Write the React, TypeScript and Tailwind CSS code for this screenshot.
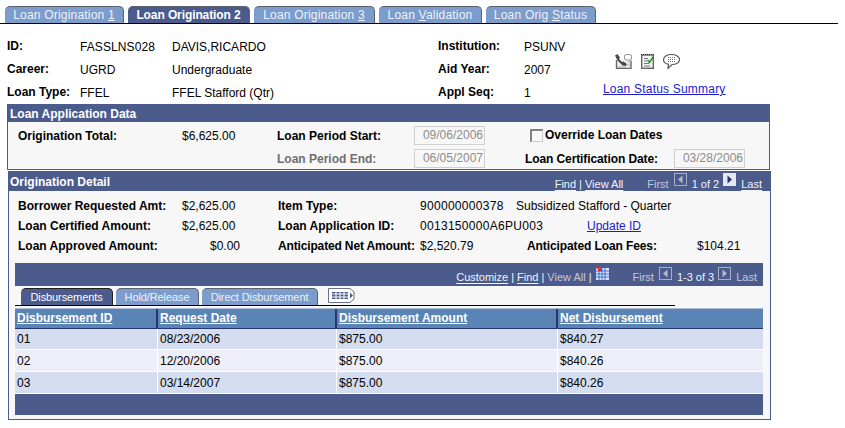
import React from 'react';

const tabs = [
  { label: 'Loan Origination ', key: '1', width: 'w-[119px]' },
  { label: 'Loan Origination 2', key: '', width: 'w-[122px]', active: true },
  { label: 'Loan Origination ', key: '3', width: 'w-[121px]' },
  { label: 'Loan ', key: 'V', rest: 'alidation', width: 'w-[103px]' },
  { label: 'Loan Orig ', key: 'S', rest: 'tatus', width: 'w-[110px]' },
];

const rows = [
  { id: '01', date: '08/23/2006', amount: '$875.00', net: '$840.27', bg: 'bg-[#d3ddef]', h: 'h-[21px]' },
  { id: '02', date: '12/20/2006', amount: '$875.00', net: '$840.26', bg: 'bg-[#edeef8]', h: 'h-[22px]' },
  { id: '03', date: '03/14/2007', amount: '$875.00', net: '$840.26', bg: 'bg-[#d3ddef]', h: 'h-[22px]' },
];

function Lbl({ children, className = 'text-black' }: { children: React.ReactNode; className?: string }) {
  return <span className={`font-bold whitespace-nowrap ${className}`}>{children}</span>;
}

function Val({ children, className = '' }: { children: React.ReactNode; className?: string }) {
  return <span className={`text-black whitespace-nowrap ${className}`}>{children}</span>;
}

function DateBox({ value }: { value: string }) {
  return (
    <div className="h-[19px] w-[71px] border border-[#d0d0d0] bg-[#f7f7f7] pr-[1px] text-right leading-[17px] text-[#8c8c8c]">
      {value}
    </div>
  );
}

function PageArrow({ dir, on }: { dir: 'left' | 'right'; on?: boolean }) {
  return (
    <svg width="13" height="13" viewBox="0 0 13 13" className="mb-[8px] shrink-0">
      <rect x="0.5" y="0.5" width="12" height="12" fill={on ? '#e4e8f2' : '#4b5b8c'} stroke={on ? '#e4e8f2' : '#a8aec4'} />
      <path
        d={dir === 'left' ? 'M8.5 2.5 L4 6.5 L8.5 10.5 Z' : 'M4.5 2.5 L9 6.5 L4.5 10.5 Z'}
        fill={on ? '#27376e' : '#b4b8c8'}
      />
    </svg>
  );
}

function IconPhone() {
  return (
    <svg width="17" height="15" viewBox="0 0 17 15">
      <path d="M1.5 6 V14.5 H16 V6.5" fill="#f0f0f0" stroke="#666" strokeWidth="1.4" />
      <path d="M0 1.5 L2.5 0 L5 3.5 L4 5 L7 8 L8.5 7.5 L12 10 L11 12 L7.5 11.5 L2.5 6.5 Z" fill="#4a4a4a" />
      <rect x="9.5" y="0.5" width="7" height="5.5" rx="2" fill="#fff" stroke="#888" />
      <path d="M3 13 H11 M12.5 8 H15 M12.5 11 H15" stroke="#aaa" strokeWidth="1" />
    </svg>
  );
}

function IconNote() {
  return (
    <svg width="13" height="15" viewBox="0 0 13 15">
      <rect x="0.7" y="1" width="11.6" height="13.3" fill="#f4f4f4" stroke="#666" strokeWidth="1.4" />
      <path d="M0 0.5 H13" stroke="#333" strokeDasharray="1 1" />
      <path d="M3 4.5 H7 M3 7 H6 M3 9.5 H8 M3 12 H9" stroke="#777" />
      <path d="M6.5 6 L8.5 8.5 L12 3" fill="none" stroke="#1c9a2c" strokeWidth="1.6" />
    </svg>
  );
}

function IconChat() {
  return (
    <svg width="17" height="15" viewBox="0 0 17 15">
      <path
        d="M8.5 0.5 C13 0.5 16.5 2.8 16.5 5.7 C16.5 8.5 13 10.5 9 10.5 L5 14.5 L5.5 10.2 C2.5 9.7 0.5 8 0.5 5.7 C0.5 2.8 4 0.5 8.5 0.5 Z"
        fill="#fff"
        stroke="#5a5a5a"
        strokeWidth="1.2"
      />
      <path d="M5 3.5 H12 M5 5.5 H12 M5 7.5 H12" stroke="#3f78c8" strokeDasharray="1 1" />
    </svg>
  );
}

function IconGrid() {
  return (
    <svg width="14" height="14" viewBox="0 0 14 14">
      <rect x="1" y="2" width="13" height="12" fill="#dfe8fb" />
      <path d="M1 5 H14 M1 8 H14 M1 11 H14 M4 2 V14 M7 2 V14 M10 2 V14" stroke="#3d6fd0" strokeWidth="1" />
      <path d="M0 0 L5 4 M3.5 4.5 H6 V2" stroke="#e02020" strokeWidth="1.6" fill="none" />
    </svg>
  );
}

function IconTabMenu() {
  return (
    <svg width="27" height="15" viewBox="0 0 27 15">
      <path d="M0.5 0.5 H22 L26 4 V11 L22 14.5 H0.5 Z" fill="#fff" stroke="#6a7186" />
      <rect x="4" y="4" width="16" height="7" fill="#4b5b8c" />
      <path d="M4 6 H20 M4 9 H20 M8 4 V11 M12 4 V11 M16 4 V11" stroke="#fff" />
      <path d="M22 4.5 L25 7.5 L22 10.5 Z" fill="#4b5b8c" />
    </svg>
  );
}

function Underlined({ children, className = '' }: { children: React.ReactNode; className?: string }) {
  return <span className={`underline underline-offset-2 ${className}`}>{children}</span>;
}

export default function App() {
  return (
    <div className="h-[428px] w-[845px] overflow-hidden bg-white pt-[6px] font-['Liberation_Sans',Arial,sans-serif] text-[12px] leading-[14px] text-black">
      {/* page tabs */}
      <div className="flex h-[18px] w-[838px] gap-[4px] border-b border-black pl-[5px]">
        {tabs.map((t) => (
          <div
            key={t.label + t.key}
            className={`flex h-[17px] items-center justify-center rounded-t-[5px] border-t border-r border-[#5c6270] ${t.width} ${
              t.active ? 'bg-[#4b5b8c] font-bold tracking-[-0.1px] text-white' : 'bg-[#7c9ccc] tracking-[0.2px] text-[#eef2fa]'
            }`}
          >
            <span className="whitespace-pre">
              {t.label}
              {t.key && <span className="underline">{t.key}</span>}
              {t.rest}
            </span>
          </div>
        ))}
      </div>

      {/* student header */}
      <div className="flex h-[80px] pl-[7px]">
        <div className="grid h-full w-[431px] grid-cols-[73px_92px_1fr] grid-rows-[34px_23px_23px] items-end pb-[1px]">
          <Lbl className="pb-[5px] text-black">ID:</Lbl>
          <Val className="pb-[4px] tracking-[0.1px]">FASSLNS028</Val>
          <Val className="pb-[4px]">DAVIS,RICARDO</Val>
          <Lbl className="pb-[5px] text-black">Career:</Lbl>
          <Val className="pb-[4px]">UGRD</Val>
          <Val className="pb-[4px]">Undergraduate</Val>
          <Lbl className="pb-[5px] text-black">Loan Type:</Lbl>
          <Val className="pb-[4px]">FFEL</Val>
          <Val className="pb-[4px]">FFEL Stafford (Qtr)</Val>
        </div>
        <div className="grid h-full w-[165px] grid-cols-[86px_1fr] grid-rows-[34px_23px_23px] items-end pb-[1px]">
          <Lbl className="pb-[5px] text-black">Institution:</Lbl>
          <Val className="pb-[4px]">PSUNV</Val>
          <Lbl className="pb-[5px] text-black">Aid Year:</Lbl>
          <Val className="pb-[4px]">2007</Val>
          <Lbl className="pb-[5px] text-black">Appl Seq:</Lbl>
          <Val className="pb-[4px]">1</Val>
        </div>
        <div className="flex flex-col pt-[30px]">
          <div className="flex items-center gap-[9px] pl-[12px]">
            <IconPhone />
            <IconNote />
            <IconChat />
          </div>
          <a className="mt-[13px] whitespace-nowrap tracking-[0.2px] text-[#1c1cd0] underline">Loan Status Summary</a>
        </div>
      </div>

      {/* loan application data */}
      <div className="ml-[7px] w-[763px] border border-[#4b5b8c] bg-[#f7f7f7]">
        <div className="flex h-[17px] items-center bg-[#4b5b8c] pl-[2px] font-bold text-white">Loan Application Data</div>
        <div className="grid h-[47px] grid-cols-[164px_95px_137px_111px_149px_1fr] grid-rows-[24px_23px] items-center pt-[1px] pl-[10px]">
          <Lbl className="pt-[1px] text-black">Origination Total:</Lbl>
          <Val className="pt-[1px]">$6,625.00</Val>
          <Lbl className="pt-[1px] text-black">Loan Period Start:</Lbl>
          <DateBox value="09/06/2006" />
          <label className="col-span-2 flex items-center gap-[2px] pl-[5px]">
            <span className="h-[13px] w-[13px] border-t-2 border-r border-b border-l-2 border-t-[#808080] border-r-[#ccc] border-b-[#ccc] border-l-[#808080] bg-[#f7f7f7]" />
            <Lbl>Override Loan Dates</Lbl>
          </label>
          <span />
          <span />
          <Lbl className="pt-[1px] text-[#6f6f6f]">Loan Period End:</Lbl>
          <DateBox value="06/05/2007" />
          <Lbl className="pt-[1px] tracking-[-0.1px] text-black">Loan Certification Date:</Lbl>
          <DateBox value="03/28/2006" />
        </div>
      </div>

      {/* origination detail */}
      <div className="mt-[1px] ml-[8px] h-[249px] w-[763px] border-x border-b border-[#4b5b8c] bg-[#f7f7f7]">
        <div className="flex h-[20px] items-center justify-between bg-[#4b5b8c] pr-[8px] pl-[1px] text-white">
          <span className="pt-[1px] font-bold">Origination Detail</span>
          <div className="flex items-center pt-[5px] text-[11px] text-[#f2f4fa]">
            <Underlined>Find</Underlined>
            <span className="mx-[3px]">|</span>
            <Underlined>View All</Underlined>
            <span className="mr-[5px] ml-[24px] text-[#c3c8da]">First</span>
            <PageArrow dir="left" />
            <span className="mr-[4px] ml-[5px]">1 of 2</span>
            <PageArrow dir="right" on />
            <Underlined className="ml-[5px]">Last</Underlined>
          </div>
        </div>

        <div className="grid grid-cols-[164px_96px_142px_96px_1fr] grid-rows-[20px_20px_20px] items-center pt-[5px] pl-[9px]">
          <Lbl>Borrower Requested Amt:</Lbl>
          <Val>$2,625.00</Val>
          <Lbl>Item Type:</Lbl>
          <Val className="tracking-[0.3px]">900000000378</Val>
          <Val>Subsidized Stafford - Quarter</Val>
          <Lbl>Loan Certified Amount:</Lbl>
          <Val>$2,625.00</Val>
          <Lbl>Loan Application ID:</Lbl>
          <Val className="tracking-[0.3px]">0013150000A6PU003</Val>
          <a className="pl-[71px] text-[#1c1cd0] underline">Update ID</a>
          <Lbl>Loan Approved Amount:</Lbl>
          <Val className="pl-[28px]">$0.00</Val>
          <Lbl className="tracking-[-0.15px] text-black">Anticipated Net Amount:</Lbl>
          <Val>$2,520.79</Val>
          <div className="flex">
            <Lbl className="w-[181px] pl-[11px] tracking-[-0.1px] text-black">Anticipated Loan Fees:</Lbl>
            <Val>$104.21</Val>
          </div>
        </div>

        {/* grid block */}
        <div className="mt-[7px] ml-[6px] w-[748px]">
          <div className="flex h-[23px] items-center justify-end bg-[#4b5b8c] pt-[5px] pr-[6px] text-[11px] text-[#f2f4fa]">
            <Underlined>Customize</Underlined>
            <span className="mx-[3px]">|</span>
            <Underlined>Find</Underlined>
            <span className="mx-[3px]">|</span>
            <span className="text-[#c3c8da]">View All</span>
            <span className="mx-[3px]">|</span>
            <span className="mb-[8px] flex">
              <IconGrid />
            </span>
            <span className="mr-[5px] ml-[24px] text-[#c3c8da]">First</span>
            <PageArrow dir="left" />
            <span className="mr-[4px] ml-[5px]">1-3 of 3</span>
            <PageArrow dir="right" />
            <span className="ml-[5px] text-[#c3c8da]">Last</span>
          </div>

          <div className="mt-[2px] flex h-[18px] w-[660px] gap-[3px] border-b border-black pl-[6px] text-[11px] tracking-[-0.1px]">
            <div className="flex h-[17px] w-[92px] items-center justify-center rounded-t-[5px] border-t border-r border-[#222] bg-[#4b5b8c] text-white">
              Disbursements
            </div>
            <div className="flex h-[17px] w-[83px] items-center justify-center rounded-t-[5px] border-t border-r border-[#5c6270] bg-[#7c9ccc] text-[#eef2fa]">
              Hold/Release
            </div>
            <div className="flex h-[17px] w-[116px] items-center justify-center rounded-t-[5px] border-t border-r border-[#5c6270] bg-[#7c9ccc] text-[#eef2fa]">
              Direct Disbursement
            </div>
            <span className="ml-[7px]">
              <IconTabMenu />
            </span>
          </div>

          <div className="mt-[2px] grid h-[21px] grid-cols-[143px_179px_221px_1fr] items-center border-t border-b border-t-[#a9bdd6] border-b-[#27376e] bg-[#5a84b5] font-bold text-white">
            <span className="border-r-2 border-[#27376e] pl-[2px] leading-[19px] underline">Disbursement ID</span>
            <span className="border-r-2 border-[#27376e] pl-[2px] leading-[19px] underline">Request Date</span>
            <span className="border-r-2 border-[#27376e] pl-[2px] leading-[19px] underline">Disbursement Amount</span>
            <span className="pl-[2px] leading-[19px] underline">Net Disbursement</span>
          </div>
          {rows.map((r) => (
            <div key={r.id} className={`grid grid-cols-[143px_179px_221px_1fr] items-center border-b border-white ${r.bg} ${r.h}`}>
              <span className="flex h-full items-center border-r border-white pl-[2px]">{r.id}</span>
              <span className="flex h-full items-center border-r border-white pl-[2px]">{r.date}</span>
              <span className="flex h-full items-center border-r border-white pl-[2px]">{r.amount}</span>
              <span className="pl-[2px]">{r.net}</span>
            </div>
          ))}
          <div className="h-[21px] bg-[#4b5b8c]" />
        </div>
      </div>
    </div>
  );
}
